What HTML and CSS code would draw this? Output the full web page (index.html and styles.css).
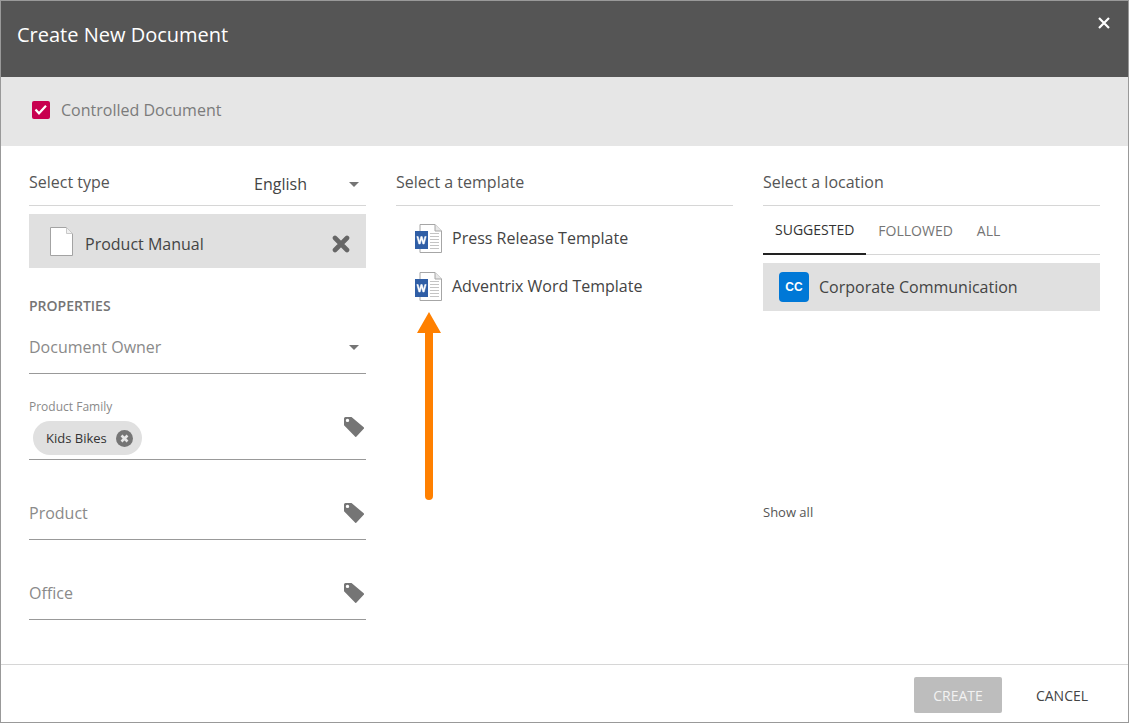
FILE: index.html
```html
<!DOCTYPE html>
<html lang="en">
<head>
<meta charset="utf-8">
<title>Create New Document</title>
<link rel="stylesheet" href="styles.css">
</head>
<body>
<svg class="defs" width="0" height="0" aria-hidden="true">
  <defs>
    <symbol id="tag" viewBox="0 0 20 20">
      <path d="M0 1.500A1.500 1.500 0 0 1 1.500 0H7.500L19.700 10.300a1 1 0 0 1 0 1.500L12.500 19.600a1 1 0 0 1-1.500 0L0 8.300ZM3.500 1.700a1.700 1.700 0 1 0 0 3.400 1.700 1.700 0 0 0 0-3.400Z" fill="#757575" fill-rule="evenodd"/>
    </symbol>
    <symbol id="word" viewBox="0 0 27 29">
      <path d="M5 .5H20L26.500 7V28.500H5Z" fill="#fff" stroke="#a6a6a6"/>
      <path d="M20 .5V7H26.500" fill="#e8e8e8" stroke="#a6a6a6"/>
      <path d="M15 9.500H24M15 12.500H24M15 15.500H24M15 18.500H24M15 21.500H24M15 24.500H24" stroke="#c4c4c4"/>
      <rect x="0" y="7" width="13" height="18" fill="#2f5ea6"/>
      <path d="M1.800 12.500 3.800 20H5.200L6.500 15.200 7.800 20H9.200L11.200 12.500H9.800L8.500 17.500 7.200 12.500H5.800L4.500 17.500 3.200 12.500Z" fill="#fff" stroke="#fff" stroke-width=".5"/>
    </symbol>
  </defs>
</svg>
<main class="dialog">
  <header class="dialog-header">
    <h1 class="dialog-title">Create New Document</h1>
    <button class="close" type="button" aria-label="Close">
      <svg width="12" height="12" viewBox="0 0 12 12"><path d="M1 1 11 11M11 1 1 11" stroke="#fff" stroke-width="2.200"/></svg>
    </button>
  </header>

  <div class="control-bar">
    <span class="checkbox">
      <svg width="18" height="18" viewBox="0 0 18 18"><path d="M3.500 8.500 7 12.300 14 4.800" fill="none" stroke="#fff" stroke-width="2.200"/></svg>
    </span>
    <span class="control-label">Controlled Document</span>
  </div>

  <div class="columns">
    <section class="column">
      <div class="col-head">
        <h2 class="col-title">Select type</h2>
        <div class="lang"><span>English</span><i class="caret"></i></div>
      </div>
      <div class="type-item">
        <svg class="page-icon" width="23" height="29" viewBox="0 0 23 29"><path d="M.500.500H16.500L22.500 6.500V28.500H.500Z" fill="#fff" stroke="#a3a3a3"/><path d="M16.500.500V6.500H22.500" fill="#f0f0f0" stroke="#c8c8c8"/></svg>
        <span class="type-name">Product Manual</span>
        <svg class="type-remove" width="18" height="18" viewBox="0 0 18 18"><path d="M3 3 15 15M15 3 3 15" stroke="#666" stroke-width="4.600" stroke-linecap="round"/></svg>
      </div>
      <h3 class="props-title">PROPERTIES</h3>
      <div class="field field-owner">
        <span class="placeholder">Document Owner</span><i class="caret"></i>
      </div>
      <div class="field field-family">
        <div class="family-body">
          <span class="mini-label">Product Family</span>
          <span class="chip">Kids Bikes
            <svg width="17" height="17" viewBox="0 0 17 17"><circle cx="8.500" cy="8.500" r="8.500" fill="#757575"/><path d="M5.500 5.500 11.500 11.500M11.500 5.500 5.500 11.500" stroke="#e6e6e6" stroke-width="2.600"/></svg>
          </span>
        </div>
        <svg class="tag tag-family" width="20" height="20"><use href="#tag"/></svg>
      </div>
      <div class="field field-tag">
        <span class="placeholder">Product</span>
        <svg class="tag" width="20" height="20"><use href="#tag"/></svg>
      </div>
      <div class="field field-tag">
        <span class="placeholder">Office</span>
        <svg class="tag" width="20" height="20"><use href="#tag"/></svg>
      </div>
    </section>

    <section class="column">
      <div class="col-head">
        <h2 class="col-title">Select a template</h2>
      </div>
      <ul class="templates">
        <li class="template"><svg width="27" height="29"><use href="#word"/></svg>Press Release Template</li>
        <li class="template"><svg width="27" height="29"><use href="#word"/></svg>Adventrix Word Template</li>
      </ul>
    </section>

    <section class="column">
      <div class="col-head">
        <h2 class="col-title">Select a location</h2>
      </div>
      <nav class="tabs">
        <span class="tab tab-active">SUGGESTED</span>
        <span class="tab">FOLLOWED</span>
        <span class="tab">ALL</span>
      </nav>
      <div class="location">
        <span class="avatar">CC</span>
        <span>Corporate Communication</span>
      </div>
      <a class="show-all">Show all</a>
    </section>
  </div>

  <footer class="dialog-footer">
    <button class="btn btn-create" type="button">CREATE</button>
    <button class="btn btn-cancel" type="button">CANCEL</button>
  </footer>

  <svg class="arrow" width="24" height="188" viewBox="0 0 24 188" aria-hidden="true">
    <path d="M12 0 24 21H16V184a4 4 0 0 1-8 0V21H0Z" fill="#ff8000"/>
  </svg>
</main>
</body>
</html>
```

FILE: styles.css
```css
* { box-sizing: border-box; }
html, body { margin: 0; padding: 0; }
body {
  width: 1129px;
  height: 723px;
  overflow: hidden;
  background: #fff;
  font-family: "Open Sans", "Liberation Sans", sans-serif;
  color: #333;
}
.defs { position: absolute; }
.dialog {
  position: relative;
  width: 1129px;
  height: 723px;
  border: 1px solid #999;
  display: flex;
  flex-direction: column;
  background: #fff;
}
.dialog-header {
  height: 76px;
  flex: none;
  background: #555;
  display: flex;
  align-items: flex-start;
  justify-content: space-between;
  padding: 0 18px 0 16px;
}
.dialog-title {
  margin: 20px 0 0;
  font-size: 20px;
  line-height: 28px;
  font-weight: 400;
  color: #fff;
}
.close {
  margin-top: 16px;
  padding: 0;
  border: 0;
  background: none;
  width: 12px;
  height: 12px;
  display: block;
}
.close svg { display: block; }
.control-bar {
  height: 69px;
  flex: none;
  background: #e6e6e6;
  display: flex;
  align-items: center;
  padding: 0 0 3px 31px;
  gap: 11px;
}
.checkbox {
  width: 18px;
  height: 18px;
  border-radius: 2px;
  background: #c8004f;
  display: block;
}
.checkbox svg { display: block; }
.control-label { font-size: 16px; color: #7b7b7b; }
.columns {
  flex: 1;
  display: flex;
  gap: 30px;
  padding: 0 28px;
}
.column { width: 337px; flex: none; display: flex; flex-direction: column; }
.col-head {
  height: 60px;
  flex: none;
  border-bottom: 1px solid #d6d6d6;
  display: flex;
  align-items: flex-start;
  justify-content: space-between;
  padding-top: 25px;
}
.col-title {
  margin: 0;
  font-size: 16px;
  line-height: 22px;
  font-weight: 400;
  color: #555;
}
.lang {
  display: flex;
  align-items: center;
  font-size: 16px;
  line-height: 22px;
  color: #444;
  margin-top: 2px;
  padding-right: 7px;
}
.lang .caret { margin-left: 42px; }
.caret {
  display: block;
  width: 0;
  height: 0;
  border-left: 5px solid transparent;
  border-right: 5px solid transparent;
  border-top: 5px solid #757575;
}
.type-item {
  height: 54px;
  flex: none;
  margin-top: 8px;
  background: #e0e0e0;
  display: flex;
  align-items: center;
  padding: 0 16px 0 21px;
}
.page-icon { flex: none; }
.type-name { margin: 6px 0 0 12px; font-size: 16px; color: #444; flex: 1; }
.type-remove { flex: none; margin-top: 6px; }
.props-title {
  margin: 28px 0 0;
  font-size: 14px;
  line-height: 20px;
  font-weight: 600;
  color: #757575;
}
.field {
  border-bottom: 1px solid #999;
  display: flex;
  justify-content: space-between;
  flex: none;
}
.placeholder { font-size: 16px; line-height: 22px; color: #8a8a8a; }
.field-owner {
  height: 58px;
  padding: 20px 7px 0 0;
  align-items: flex-start;
}
.field-owner .caret { margin-top: 9px; }
.field-family { height: 86px; padding-top: 24px; }
.family-body { display: flex; flex-direction: column; align-items: flex-start; }
.mini-label { font-size: 12px; line-height: 18px; color: #8a8a8a; }
.chip {
  margin: 5px 0 0 4px;
  width: 109px;
  height: 34px;
  border-radius: 17px;
  background: #e0e0e0;
  display: flex;
  align-items: center;
  justify-content: space-between;
  padding: 0 9px 0 13px;
  font-size: 13px;
  color: #333;
}
.tag { flex: none; margin-right: 2px; }
.tag-family { margin-top: 19px; }
.field-tag { height: 80px; padding-top: 42px; align-items: flex-start; }
.field-tag .tag { margin-top: 1px; }
.templates { list-style: none; margin: 0; padding: 8px 0 0; }
.template {
  height: 48px;
  display: flex;
  align-items: center;
  gap: 10px;
  padding-left: 19px;
  font-size: 16px;
  color: #444;
}
.tabs {
  height: 49px;
  flex: none;
  display: flex;
  border-bottom: 1px solid #d6d6d6;
}
.tab {
  padding: 0 12px;
  font-size: 14px;
  line-height: 50px;
  color: #757575;
}
.tab-active {
  color: #333;
  line-height: 48px;
  height: 49px;
  border-bottom: 2px solid #222;
}
.location {
  height: 48px;
  flex: none;
  margin-top: 8px;
  background: #e0e0e0;
  display: flex;
  align-items: center;
  gap: 10px;
  padding-left: 16px;
  font-size: 16px;
  color: #444;
}
.avatar {
  width: 30px;
  height: 30px;
  border-radius: 4px;
  background: #0078d7;
  color: #fff;
  font-family: "Liberation Sans", sans-serif;
  font-weight: 700;
  font-size: 12px;
  display: flex;
  align-items: center;
  justify-content: center;
}
.show-all {
  margin-top: 192px;
  font-size: 13px;
  line-height: 18px;
  color: #555;
}
.dialog-footer {
  height: 58px;
  flex: none;
  border-top: 1px solid #d6d6d6;
  display: flex;
  align-items: flex-start;
  justify-content: flex-end;
  padding: 12px 22px 0 0;
  gap: 16px;
}
.btn {
  height: 36px;
  border: 0;
  border-radius: 2px;
  font-family: inherit;
  font-size: 14px;
  padding: 0;
}
.btn-create { width: 88px; background: #bdbdbd; color: #f2f2f2; }
.btn-cancel { width: 88px; background: none; color: #444; }
.arrow { position: absolute; left: 416px; top: 311px; }
```
